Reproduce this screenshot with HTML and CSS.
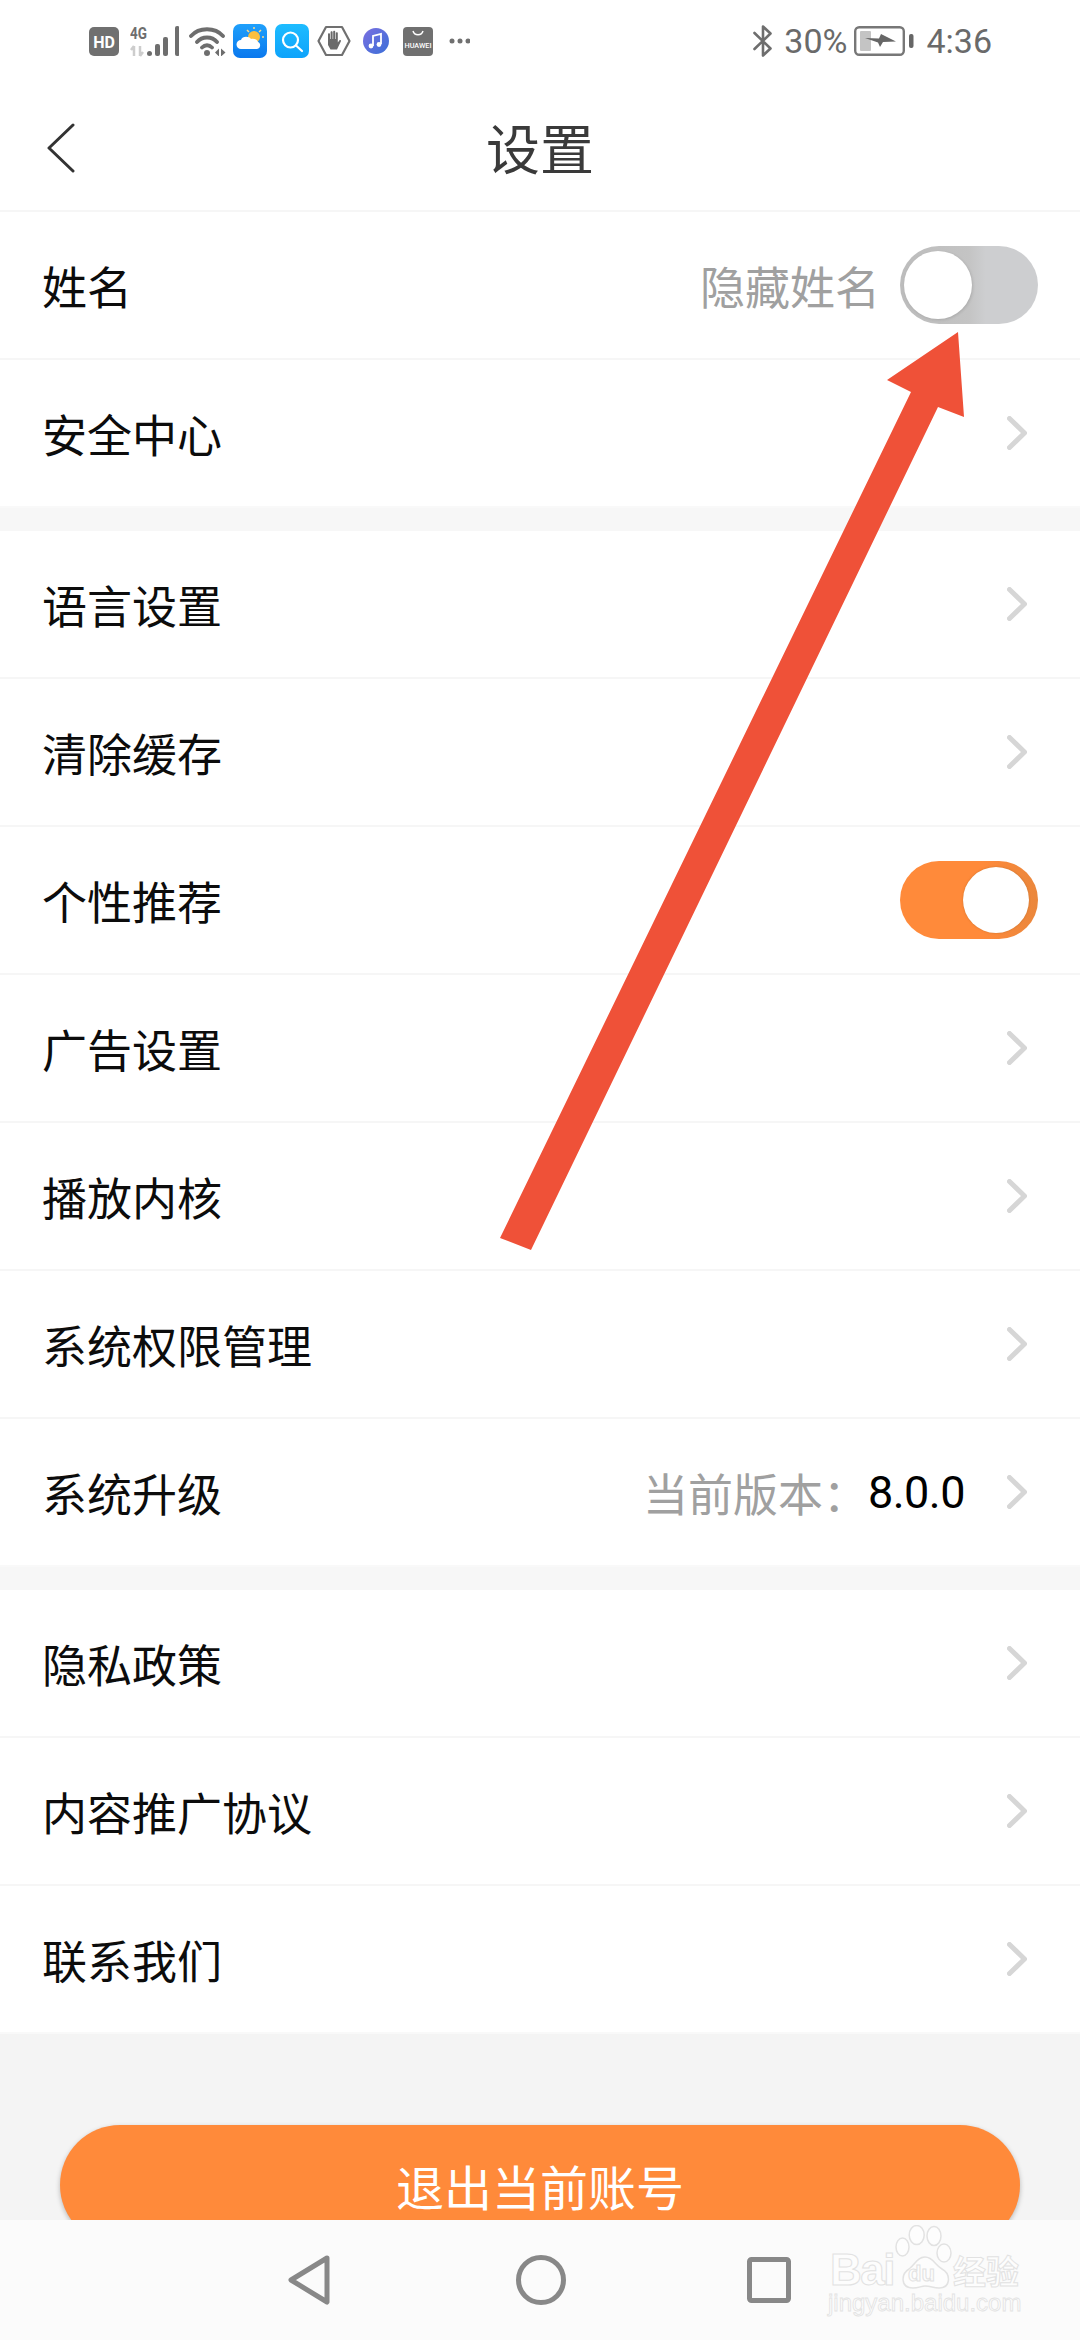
FILE: index.html
```html
<!DOCTYPE html>
<html lang="zh-CN">
<head>
<meta charset="utf-8">
<title>设置</title>
<link rel="stylesheet" href="styles.css">
</head>
<body>
<div class="page">
  <div class="status">
    <div class="status-left">
      <svg class="ic ic-hd" viewBox="0 0 30 29"><rect width="30" height="29" rx="5" fill="#707070"/><text x="15" y="20.500" text-anchor="middle" class="svg-hd">HD</text></svg>
      <svg class="ic ic-sig" viewBox="0 0 49 32"><text x="0" y="14" textLength="17" lengthAdjust="spacingAndGlyphs" class="svg-4g">4G</text><path d="M4 21v10M1 25l3-4M10 21v10M10 31l3-4" stroke="#cdcdcd" stroke-width="2.500" fill="none"/><circle cx="19.500" cy="28.500" r="2.500" fill="#6e6e6e"/><rect x="25" y="19" width="5" height="12" rx="2" fill="#6e6e6e"/><rect x="33" y="12" width="5" height="19" rx="2" fill="#6e6e6e"/><rect x="45" y="1" width="4.500" height="30" rx="2" fill="#6e6e6e"/></svg>
      <svg class="ic ic-wifi" viewBox="0 0 37 30"><path d="M2 10C10 1 26 1 34 10M8 16c5-6 15-6 20 0M13 21.500c3-3 7-3 10 0" stroke="#6e6e6e" stroke-width="3.800" fill="none" stroke-linecap="round"/><circle cx="18" cy="27" r="3" fill="#6e6e6e"/><path d="M26 26.500l4-4v8zM32 22.500l4.500 4-4.500 4z" fill="#6e6e6e"/></svg>
      <svg class="ic ic-app" viewBox="0 0 34 34"><defs><linearGradient id="wx" x1="0" y1="0" x2="0" y2="1"><stop offset="0" stop-color="#1fa0fb"/><stop offset="1" stop-color="#0a78ee"/></linearGradient></defs><rect width="34" height="34" rx="7" fill="url(#wx)"/><circle cx="21" cy="13" r="6" fill="#fbbf3f"/><path d="M21 3v2M28 6l-2 2M31 13h-2M14 6l2 2" stroke="#fbd98a" stroke-width="1.500"/><path d="M8 25a4.500 4.500 0 0 1 0-9c1-4 8-4 10-1 3-1 6 .5 7 3 3 .5 3 7-1 7z" fill="#fff"/></svg>
      <svg class="ic ic-app" viewBox="0 0 34 34"><defs><linearGradient id="sr" x1="0" y1="0" x2="0" y2="1"><stop offset="0" stop-color="#1ebcff"/><stop offset="1" stop-color="#0ea3fb"/></linearGradient></defs><rect width="34" height="34" rx="7" fill="url(#sr)"/><circle cx="15.500" cy="16" r="7.500" stroke="#fff" stroke-width="2.200" fill="none"/><path d="M21 21.500l6 5.500" stroke="#fff" stroke-width="2.200" stroke-linecap="round"/></svg>
      <svg class="ic ic-hand" viewBox="0 0 34 32"><path d="M1.500 16L9 2h16l7.500 14L25 30H9z" fill="#fff" stroke="#707070" stroke-width="2.200" stroke-linejoin="round"/><path d="M11 9c0-1 2-1 2 0v5h.600V7c0-1 2-1 2 0v7h.600V6.500c0-1 2-1 2 0V14h.600V8c0-1 2-1 2 0v9.500l1.500-2c.800-1 2.200 0 1.500 1L20 24.500h-6.500L11 20z" fill="#6a6a6a"/></svg>
      <svg class="ic ic-music" viewBox="0 0 28 28"><defs><linearGradient id="mu" x1="0" y1="0" x2="1" y2="1"><stop offset="0" stop-color="#7a6fe0"/><stop offset="1" stop-color="#3b6fd8"/></linearGradient></defs><circle cx="14" cy="14" r="13" fill="url(#mu)"/><path d="M11 19V9l8-2v10" stroke="#fff" stroke-width="1.800" fill="none"/><circle cx="9" cy="19" r="2.400" fill="#fff"/><circle cx="17" cy="17.500" r="2.400" fill="#fff"/></svg>
      <svg class="ic ic-hw" viewBox="0 0 30 29"><rect width="30" height="29" rx="4" fill="#707070"/><path d="M10 4c1.500 5 8.500 5 10 0" stroke="#fff" stroke-width="1.500" fill="none"/><text x="15" y="21" text-anchor="middle" textLength="27" lengthAdjust="spacingAndGlyphs" class="svg-hw">HUAWEI</text></svg>
      <svg class="ic ic-dots" viewBox="0 0 21 6"><circle cx="3" cy="3" r="2.500" fill="#707070"/><circle cx="11" cy="3" r="2.500" fill="#707070"/><circle cx="19" cy="3" r="2.500" fill="#707070"/></svg>
    </div>
    <div class="status-right">
      <svg class="ic ic-bt" viewBox="0 0 20 32"><path d="M1.500 8l16 15.500L10 30.500V1.500L17.500 8.500 1.500 24" stroke="#6e6e6e" stroke-width="2.600" fill="none" stroke-linejoin="round" stroke-linecap="round"/></svg>
      <span class="st-pct">30%</span>
      <svg class="ic ic-bat" viewBox="0 0 60 30"><rect x="1.200" y="1.200" width="48.600" height="27.600" rx="4" fill="none" stroke="#777" stroke-width="2.400"/><rect x="6" y="5" width="11" height="20" rx="1" fill="#c4c4c4"/><path d="M11 12L25 12.500L27 8L42 15.500L29 16L26 21L24 16.500z" fill="#666"/><rect x="55" y="8" width="4.500" height="14" rx="2" fill="#666"/></svg>
      <span class="st-time">4:36</span>
    </div>
  </div>
  <header class="head">
    <svg class="back" viewBox="0 0 30 50"><path d="M27 2L3 25l24 23" fill="none" stroke="#333" stroke-width="3" stroke-linecap="round" stroke-linejoin="round"/></svg>
    <h1 class="title">设置</h1>
  </header>

  <main class="content">
    <section class="group">
      <div class="row"><span class="label">姓名</span><span class="side"><span class="hint">隐藏姓名</span><span class="switch off"><span class="knob"></span></span></span></div>
      <div class="row"><span class="label">安全中心</span><span class="side"><svg class="chev" viewBox="0 0 20 34"><path d="M2.500 2.500L17.500 17 2.500 31.500"/></svg></span></div>
    </section>
    <section class="group">
      <div class="row"><span class="label">语言设置</span><span class="side"><svg class="chev" viewBox="0 0 20 34"><path d="M2.500 2.500L17.500 17 2.500 31.500"/></svg></span></div>
      <div class="row"><span class="label">清除缓存</span><span class="side"><svg class="chev" viewBox="0 0 20 34"><path d="M2.500 2.500L17.500 17 2.500 31.500"/></svg></span></div>
      <div class="row"><span class="label">个性推荐</span><span class="side"><span class="switch on"><span class="knob"></span></span></span></div>
      <div class="row"><span class="label">广告设置</span><span class="side"><svg class="chev" viewBox="0 0 20 34"><path d="M2.500 2.500L17.500 17 2.500 31.500"/></svg></span></div>
      <div class="row"><span class="label">播放内核</span><span class="side"><svg class="chev" viewBox="0 0 20 34"><path d="M2.500 2.500L17.500 17 2.500 31.500"/></svg></span></div>
      <div class="row"><span class="label">系统权限管理</span><span class="side"><svg class="chev" viewBox="0 0 20 34"><path d="M2.500 2.500L17.500 17 2.500 31.500"/></svg></span></div>
      <div class="row"><span class="label">系统升级</span><span class="side"><span class="version"><span class="hint">当前版本：</span><span class="ver-num">8.0.0</span></span><svg class="chev" viewBox="0 0 20 34"><path d="M2.500 2.500L17.500 17 2.500 31.500"/></svg></span></div>
    </section>
    <section class="group">
      <div class="row"><span class="label">隐私政策</span><span class="side"><svg class="chev" viewBox="0 0 20 34"><path d="M2.500 2.500L17.500 17 2.500 31.500"/></svg></span></div>
      <div class="row"><span class="label">内容推广协议</span><span class="side"><svg class="chev" viewBox="0 0 20 34"><path d="M2.500 2.500L17.500 17 2.500 31.500"/></svg></span></div>
      <div class="row"><span class="label">联系我们</span><span class="side"><svg class="chev" viewBox="0 0 20 34"><path d="M2.500 2.500L17.500 17 2.500 31.500"/></svg></span></div>
    </section>
    <div class="footer"><button class="logout">退出当前账号</button></div>
  </main>

  <nav class="nav">
    <svg class="nav-ic nav-back" viewBox="0 0 42 50"><path d="M39 3L3 25l36 22z"/></svg>
    <svg class="nav-ic nav-home" viewBox="0 0 50 50"><circle cx="25" cy="25" r="22.500"/></svg>
    <svg class="nav-ic nav-rec" viewBox="0 0 44 46"><rect x="2.500" y="2.500" width="39" height="41" rx="2"/></svg>
  </nav>

  <svg class="arrow" viewBox="0 0 1080 2340"><polygon points="500,1238 531,1250 938,407 964,417 958,332 887,380 911,392"/></svg>

  <div class="mark">
    <svg class="paw" viewBox="0 0 57 65"><ellipse cx="7.500" cy="22" rx="6.500" ry="9"/><ellipse cx="21.700" cy="10" rx="7.500" ry="9.500"/><ellipse cx="39" cy="11" rx="7" ry="9.500"/><ellipse cx="49" cy="28" rx="7" ry="9"/><path d="M30 32C22 32 20 40 14 44C6 49 5 63 18 63C24 63 26 61 30 61C36 61 38 63 44 63C56 63 56 49 47 44C40 40 38 32 30 32Z"/></svg>
    <span class="mark-txt mark-bai">Bai</span>
    <span class="mark-txt mark-du">du</span>
    <span class="mark-txt mark-cn">经验</span>
    <span class="mark-txt mark-url">jingyan.baidu.com</span>
  </div>
</div>
</body>
</html>
```
FILE: styles.css
```css
* { box-sizing: border-box; }
html, body { margin: 0; padding: 0; }
body {
  width: 1080px;
  height: 2340px;
  overflow: hidden;
  background: #fff;
  font-family: "Noto Sans CJK SC", "Noto Sans", sans-serif;
}
.page {
  position: relative;
  width: 1080px;
  height: 2340px;
  display: flex;
  flex-direction: column;
  overflow: hidden;
}
.ic { display: block; flex: none; }

/* status bar */
.status {
  height: 82px;
  flex: none;
  display: flex;
  align-items: center;
  justify-content: space-between;
  padding: 0 88px 0 89px;
  color: #666;
}
.status-left, .status-right { display: flex; align-items: center; }
.ic-hd { width: 30px; height: 29px; }
.ic-sig { width: 49px; height: 32px; margin-left: 11px; }
.ic-wifi { width: 37px; height: 30px; margin-left: 10px; }
.ic-app { width: 34px; height: 34px; margin-left: 8px; }
.ic-wifi + .ic-app { margin-left: 7px; }
.ic-hand { width: 34px; height: 32px; margin-left: 8px; }
.ic-music { width: 28px; height: 28px; margin-left: 11px; }
.ic-hw { width: 30px; height: 29px; margin-left: 13px; }
.ic-dots { width: 21px; height: 6px; margin-left: 16px; }
.svg-hd { font: 700 16px "Roboto", sans-serif; fill: #fff; }
.svg-4g { font: 700 17px "Roboto", sans-serif; fill: #6e6e6e; }
.svg-hw { font: 500 6.500px "Roboto", sans-serif; fill: #fff; }
.ic-bt { width: 20px; height: 32px; }
.st-pct, .st-time { font: 400 34px/1 "Roboto", sans-serif; color: #6a6a6a; }
.st-pct { margin-left: 11px; }
.ic-bat { width: 60px; height: 30px; margin-left: 7px; }
.st-time { margin-left: 12px; }

/* title bar */
.head {
  position: relative;
  flex: none;
  height: 130px;
  display: flex;
  align-items: center;
  justify-content: center;
  padding-top: 1px;
  border-bottom: 2px solid #f6f6f6;
}
.back {
  position: absolute;
  left: 46px;
  top: 41px;
  width: 30px;
  height: 50px;
}
.title {
  margin: 0;
  font-size: 54px;
  font-weight: 400;
  line-height: 1;
  color: #3a3a3a;
}

/* list */
.content {
  flex: 1;
  min-height: 0;
  overflow: hidden;
  background: #f7f7f7;
  display: flex;
  flex-direction: column;
}
.group { background: #fff; flex: none; }
.group + .group { margin-top: 23px; }
.row {
  height: 148px;
  padding: 0 42px;
  display: flex;
  align-items: center;
  justify-content: space-between;
  border-bottom: 2px solid #f6f6f6;
}
.row:last-child { border-bottom-color: #f9f9f9; }
.label { font-size: 45px; line-height: 1; color: #0c0c0c; }
.side { display: flex; align-items: center; }
.hint { font-size: 45px; line-height: 1; color: #a0a0a0; }
.side > .hint { margin-right: 20px; }
.version { display: flex; align-items: center; margin-right: 42px; }
.ver-num { font: 400 45px/1 "Roboto", sans-serif; letter-spacing: -.5px; color: #000; }
.chev {
  display: block;
  width: 20px;
  height: 34px;
  margin-right: 11px;
  fill: none;
  stroke: #d6d6d6;
  stroke-width: 5;
  stroke-linecap: round;
  stroke-linejoin: round;
}

/* toggles */
.switch {
  width: 138px;
  height: 78px;
  border-radius: 39px;
  display: flex;
  align-items: center;
}
.switch.off {
  justify-content: flex-start;
  padding-left: 4px;
  background: linear-gradient(90deg, #bcbcbc 0, #c4c4c4 50%, #cdced0 62%, #cdced0 100%);
}
.switch.on {
  justify-content: flex-end;
  padding-right: 9px;
  background: linear-gradient(90deg, #ff8a3a 0, #ff8a3a 60%, #ea873c 100%);
}
.knob {
  display: block;
  border-radius: 50%;
  background: #fff;
}
.off .knob { width: 68px; height: 68px; box-shadow: 1px 1px 3px rgba(0,0,0,.12); }
.on .knob { width: 66px; height: 66px; box-shadow: 0 0 2px rgba(150,90,30,.5); }

/* logout */
.footer {
  flex: 1;
  padding: 91px 60px 0;
  min-height: 0;
  overflow: hidden;
  background: #f4f4f4;
}
.logout {
  display: flex;
  align-items: center;
  justify-content: center;
  width: 100%;
  height: 120px;
  border: 0;
  border-radius: 60px;
  background: #ff8a3a;
  color: #fff;
  font-family: inherit;
  font-size: 48px;
  box-shadow: 0 2px 5px rgba(0,0,0,.25);
}

/* navigation bar */
.nav {
  flex: none;
  height: 120px;
  background: #fbfbfb;
  display: flex;
  align-items: center;
  padding-left: 288px;
}
.nav-ic {
  display: block;
  flex: none;
  fill: none;
  stroke: #888;
  stroke-width: 5;
  stroke-linejoin: round;
}
.nav-back { width: 42px; height: 50px; }
.nav-home { width: 50px; height: 50px; margin-left: 186px; }
.nav-rec { width: 44px; height: 46px; margin-left: 181px; }

/* overlays */
.arrow {
  position: absolute;
  left: 0;
  top: 0;
  width: 1080px;
  height: 2340px;
  fill: #ef5138;
  pointer-events: none;
}
.mark {
  position: absolute;
  left: 828px;
  top: 2225px;
  width: 200px;
  height: 110px;
}
.paw {
  position: absolute;
  left: 67px;
  top: 0;
  width: 57px;
  height: 65px;
  fill: #fdfdfd;
  stroke: #e2e2e2;
  stroke-width: 1.500;
}
.mark-txt {
  position: absolute;
  line-height: 1;
  white-space: nowrap;
  font-family: "Liberation Sans", sans-serif;
  color: #fdfdfd;
  -webkit-text-stroke: 1px #e2e2e2;
}
.mark-bai { left: 2px; top: 25px; font-size: 44px; line-height: 40px; font-weight: 700; letter-spacing: -1.500px; }
.mark-du { left: 80px; top: 38px; font-size: 22px; font-weight: 700; }
.mark-cn { left: 125px; top: 27px; font-family: "Noto Sans CJK SC", sans-serif; font-size: 33px; line-height: 36px; font-weight: 700; }
.mark-url { left: 0; top: 66px; font-size: 24px; -webkit-text-stroke-width: .8px; }
```
